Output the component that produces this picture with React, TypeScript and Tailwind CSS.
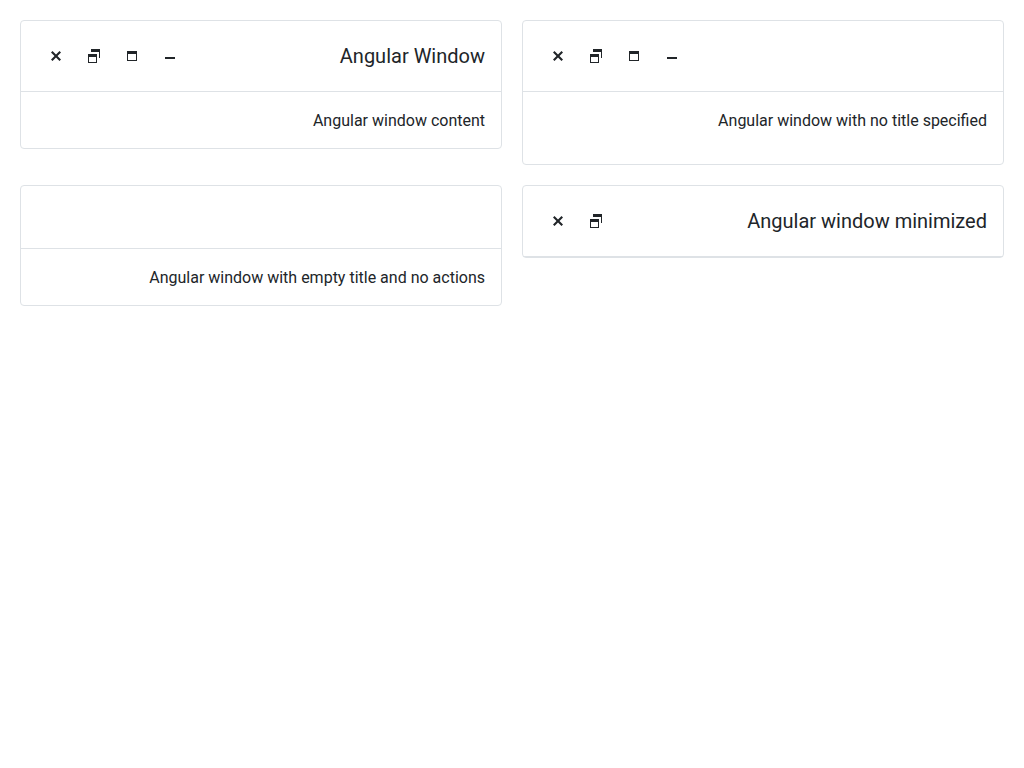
import type { ReactNode } from "react";

type IconName = "close" | "restore" | "maximize" | "minimize";

const shapes: Record<IconName, ReactNode> = {
  close: (
    <path d="M13 4.5 11.5 3 8 6.5 4.5 3 3 4.5 6.5 8 3 11.5 4.5 13 8 9.5l3.5 3.5 1.5-1.5L9.5 8z" />
  ),
  restore: (
    <path
      fillRule="evenodd"
      d="M5 1h9v9h-1V4H5zM2 6h9v9H2zM3 9v5h7V9z"
    />
  ),
  maximize: <path fillRule="evenodd" d="M3 3h10v10H3zM4 6v6h8V6z" />,
  minimize: <path d="M3 9h10v2H3z" />,
};

function Action({ name }: { name: IconName }) {
  return (
    <button
      type="button"
      aria-label={name}
      className="flex size-[38px] items-center justify-center"
    >
      <svg viewBox="0 0 16 16" className="size-4 fill-current">
        {shapes[name]}
      </svg>
    </button>
  );
}

interface WindowProps {
  title?: string;
  actions?: IconName[];
  tall?: boolean;
  children?: ReactNode;
}

function Window({ title = "", actions = [], tall = false, children }: WindowProps) {
  return (
    <section
      dir="rtl"
      className="rounded border border-[#dee2e6] bg-white"
    >
      <header className="flex items-center border-b border-[#dee2e6] p-4">
        <h2 className="h-[30px] flex-1 text-xl leading-[30px]">{title}</h2>
        <div className="flex flex-row-reverse">
          {actions.map((name) => (
            <Action key={name} name={name} />
          ))}
        </div>
      </header>
      {children && (
        <div className={tall ? "px-4 pt-[17px] pb-[31px]" : "px-4 pt-[17px] pb-[15px]"}>
          {children}
        </div>
      )}
    </section>
  );
}

const allActions: IconName[] = ["close", "restore", "maximize", "minimize"];

export default function App() {
  return (
    <main className="grid grid-cols-2 items-start gap-5 bg-white p-5 font-['Roboto',sans-serif] text-base text-[#212529]">
      <Window title="Angular Window" actions={allActions}>
        Angular window content
      </Window>
      <Window actions={allActions} tall>
        Angular window with no title specified
      </Window>
      <Window>Angular window with empty title and no actions</Window>
      <Window title="Angular window minimized" actions={["close", "restore"]} />
    </main>
  );
}
